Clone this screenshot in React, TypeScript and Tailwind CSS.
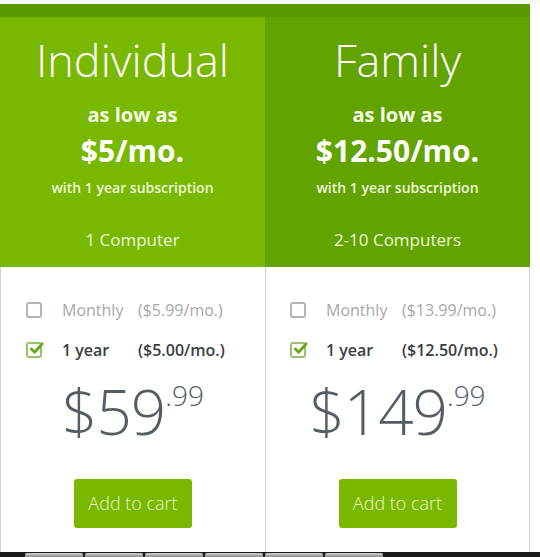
import React from 'react';

interface Plan {
  name: string;
  perMonth: string;
  computers: string;
  monthly: string;
  yearly: string;
  whole: string;
  cents: string;
  headerBg: string;
}

const plans: Plan[] = [
  {
    name: 'Individual',
    perMonth: '$5/mo.',
    computers: '1 Computer',
    monthly: '($5.99/mo.)',
    yearly: '($5.00/mo.)',
    whole: '$59',
    cents: '.99',
    headerBg: 'bg-[#78b800]',
  },
  {
    name: 'Family',
    perMonth: '$12.50/mo.',
    computers: '2-10 Computers',
    monthly: '($13.99/mo.)',
    yearly: '($12.50/mo.)',
    whole: '$149',
    cents: '.99',
    headerBg: 'bg-[#63a300]',
  },
];

const EmptyBox = () => (
  <span className="w-[16px] h-[16px] rounded-[3px] border-2 border-[#b4b4b4] bg-white shrink-0" />
);

const CheckedBox = () => (
  <span className="relative w-[16px] h-[16px] rounded-[3px] border-2 border-[#9bbf6a] bg-white shrink-0">
    <svg viewBox="0 0 16 16" className="absolute left-[1px] -top-[3px] w-[15px] h-[15px]">
      <path d="M2.5 8.5 L6 12 L14 3" fill="none" stroke="#6aa81a" strokeWidth="3" strokeLinecap="round" strokeLinejoin="round" />
    </svg>
  </span>
);

const PlanColumn = ({ plan, last }: { plan: Plan; last: boolean }) => (
  <div className="flex flex-col">
    <div className={`${plan.headerBg} h-[250px] flex flex-col items-center text-white`}>
      <div className="mt-[16px] text-[45px] leading-[54px] font-light">{plan.name}</div>
      <div className="mt-[16px] text-[20px] leading-[24px] font-bold text-[#f3fbe6]">as low as</div>
      <div className="mt-[6px] text-[30px] leading-[36px] font-bold">{plan.perMonth}</div>
      <div className="mt-[10px] text-[14px] leading-[18px] font-semibold text-[#eef8dd]">
        with 1 year subscription
      </div>
      <div className="mt-[33px] text-[17px] leading-[20px] text-[#eef8dd]">{plan.computers}</div>
    </div>
    <div className={`h-[285px] flex flex-col border-l border-[#d2d2d2] ${last ? 'border-r pl-[24px]' : 'pl-[25px]'}`}>
      <div className="mt-[35px] flex items-center h-[16px] text-[16px]">
        <EmptyBox />
        <span className="ml-[20px] text-[#a8a8a8] w-[76px]">Monthly</span>
        <span className="text-[#a8a8a8]">{plan.monthly}</span>
      </div>
      <div className="mt-[24px] flex items-center h-[16px] text-[16px]">
        <CheckedBox />
        <span className="ml-[20px] text-[#3a3d40] font-semibold w-[76px]">1 year</span>
        <span className="text-[#3a3d40] font-semibold">{plan.yearly}</span>
      </div>
      <div className={`mt-[20px] flex justify-center text-[#545d63] ${last ? '-ml-[24px]' : '-ml-[25px]'}`}>
        <span className="text-[62px] leading-[66px] font-light tracking-[-1px]">{plan.whole}</span>
        <span className="text-[28px] leading-[34px] font-light">{plan.cents}</span>
      </div>
      <div className={`mt-[35px] flex justify-center ${last ? '-ml-[24px]' : '-ml-[25px]'}`}>
        <button className="bg-[#7ab800] rounded-[3px] h-[49px] w-[118px] text-[18px] text-[#eaf7cf] font-light">
          Add to cart
        </button>
      </div>
    </div>
  </div>
);

export default function App() {
  return (
    <div
      className="w-[540px] h-[557px] bg-white flex flex-col overflow-hidden"
      style={{ fontFamily: '"Open Sans", Lato, sans-serif' }}
    >
      <div className="h-[4px] bg-[#f8fbf2]" />
      <div className="w-[530px] flex flex-col">
        <div className="h-[13px] bg-[#5a9a00]" />
        <div className="grid grid-cols-[265px_265px]">
          {plans.map((p, i) => (
            <PlanColumn key={p.name} plan={p} last={i === plans.length - 1} />
          ))}
        </div>
      </div>
      <div className="flex-1 bg-[#1a1a1a] flex items-end gap-[2px] pl-[25px]">
        {[0, 1, 2, 3, 4, 5].map((t) => (
          <div key={t} className="w-[58px] h-[4px] rounded-t-[2px] bg-gradient-to-b from-[#d8d8d8] to-[#8a8a8a]" />
        ))}
      </div>
    </div>
  );
}
